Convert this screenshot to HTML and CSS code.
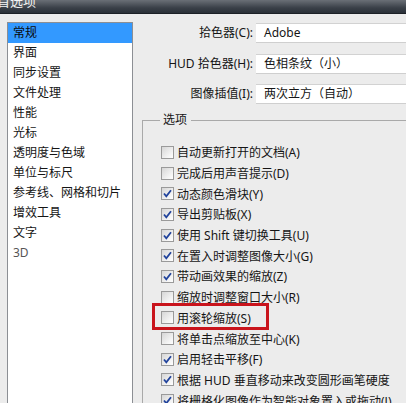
FILE: index.html
```html
<!DOCTYPE html>
<html lang="zh-CN">
<head>
<meta charset="utf-8">
<title>首选项</title>
<link rel="stylesheet" href="styles.css">
</head>
<body>
<div class="titlebar"><span class="title">首选项</span></div>
<div class="main">
  <ul class="nav">
    <li class="sel">常规</li>
    <li>界面</li>
    <li>同步设置</li>
    <li>文件处理</li>
    <li>性能</li>
    <li>光标</li>
    <li>透明度与色域</li>
    <li>单位与标尺</li>
    <li>参考线、网格和切片</li>
    <li>增效工具</li>
    <li>文字</li>
    <li class="dim">3D</li>
  </ul>
  <div class="pane">
    <div class="field"><label class="lbl">拾色器(C):</label><div class="combo">Adobe</div></div>
    <div class="field"><label class="lbl">HUD 拾色器(H):</label><div class="combo">色相条纹（小）</div></div>
    <div class="field"><label class="lbl">图像插值(I):</label><div class="combo">两次立方（自动）</div></div>
    <fieldset class="group">
      <legend>选项</legend>
      <div class="row"><span class="cb"></span>自动更新打开的文档(A)</div>
      <div class="row"><span class="cb"></span>完成后用声音提示(D)</div>
      <div class="row"><span class="cb on"><svg viewBox="0 0 11 11"><path d="M2 5.5 L4.3 8.3 L9 2.2"/></svg></span>动态颜色滑块(Y)</div>
      <div class="row"><span class="cb on"><svg viewBox="0 0 11 11"><path d="M2 5.5 L4.3 8.3 L9 2.2"/></svg></span>导出剪贴板(X)</div>
      <div class="row"><span class="cb on"><svg viewBox="0 0 11 11"><path d="M2 5.5 L4.3 8.3 L9 2.2"/></svg></span>使用 Shift 键切换工具(U)</div>
      <div class="row"><span class="cb on"><svg viewBox="0 0 11 11"><path d="M2 5.5 L4.3 8.3 L9 2.2"/></svg></span>在置入时调整图像大小(G)</div>
      <div class="row"><span class="cb on"><svg viewBox="0 0 11 11"><path d="M2 5.5 L4.3 8.3 L9 2.2"/></svg></span>带动画效果的缩放(Z)</div>
      <div class="row"><span class="cb"></span>缩放时调整窗口大小(R)</div>
      <div class="row mark"><span class="hl"></span><span class="cb"></span>用滚轮缩放(S)</div>
      <div class="row"><span class="cb"></span>将单击点缩放至中心(K)</div>
      <div class="row"><span class="cb on"><svg viewBox="0 0 11 11"><path d="M2 5.5 L4.3 8.3 L9 2.2"/></svg></span>启用轻击平移(F)</div>
      <div class="row"><span class="cb on"><svg viewBox="0 0 11 11"><path d="M2 5.5 L4.3 8.3 L9 2.2"/></svg></span>根据 HUD 垂直移动来改变圆形画笔硬度</div>
      <div class="row"><span class="cb on"><svg viewBox="0 0 11 11"><path d="M2 5.5 L4.3 8.3 L9 2.2"/></svg></span>将栅格化图像作为智能对象置入或拖动(J)</div>
    </fieldset>
  </div>
</div>
</body>
</html>
```
FILE: styles.css
```css
html, body {
  margin: 0;
  padding: 0;
  width: 406px;
  height: 403px;
  overflow: hidden;
  background: #ececec;
  font-family: "Noto Sans", "Noto Sans CJK SC", sans-serif;
  font-size: 12px;
  color: #151515;
}
.titlebar {
  height: 13px;
  overflow: hidden;
  background: linear-gradient(#6a6f76, #3a4048 60%, #2a3038);
  border-bottom: 1px solid #1c2026;
}
.title {
  display: block;
  margin: -7px 0 0 -3px;
  color: #f4f4f4;
  font-size: 13px;
  line-height: 16px;
}
.main {
  display: flex;
  align-items: flex-start;
}
.nav {
  list-style: none;
  margin: 8px 0 0 7px;
  padding: 0;
  width: 124px;
  height: 400px;
  flex: none;
  background: #fff;
  border: 1px solid #8c8f94;
}
.nav li {
  height: 20px;
  line-height: 20px;
  padding-left: 5px;
  white-space: nowrap;
}
.nav li.sel {
  background: #3399ff;
  color: #0a0a0a;
}
.nav li.dim {
  color: #555;
}
.pane {
  flex: none;
  width: 300px;
  margin-left: 8px;
  padding-top: 9px;
}
.field {
  display: flex;
  align-items: stretch;
  height: 20px;
  margin-bottom: 10.5px;
}
.lbl {
  width: 112px;
  flex: none;
  text-align: right;
  line-height: 20px;
  margin-right: 3px;
  white-space: nowrap;
}
.combo {
  flex: none;
  width: 200px;
  background: #fff;
  border-top: 1px solid #d2d2d2;
  border-bottom: 1px solid #cfcfcf;
  box-sizing: border-box;
  line-height: 18px;
  padding-left: 8px;
  white-space: nowrap;
}
.group {
  margin: -2.5px 0 0 1px;
  padding: 14px 0 0 18px;
  border: 1px solid #a9a9a9;
  border-right: none;
  border-bottom: none;
  min-width: 0;
}
.group legend {
  padding: 0 4px 0 3px;
  line-height: 16px;
  margin-left: -1px;
}
.row {
  height: 20.7px;
  display: flex;
  align-items: center;
  white-space: nowrap;
}
.cb {
  flex: none;
  width: 11px;
  height: 11px;
  margin-right: 3px;
  border: 1px solid #9a9a9a;
  background: linear-gradient(135deg, #d6d6d6, #f4f4f4 70%, #fff);
  position: relative;
}
.cb svg {
  display: block;
  width: 11px;
  height: 11px;
}
.cb svg path {
  fill: none;
  stroke: #21439c;
  stroke-width: 1.8;
}
.mark {
  position: relative;
}
.hl {
  position: absolute;
  left: -9px;
  top: -5px;
  width: 117px;
  height: 27px;
  box-sizing: border-box;
  border: 3px solid #c9141c;
}
```
